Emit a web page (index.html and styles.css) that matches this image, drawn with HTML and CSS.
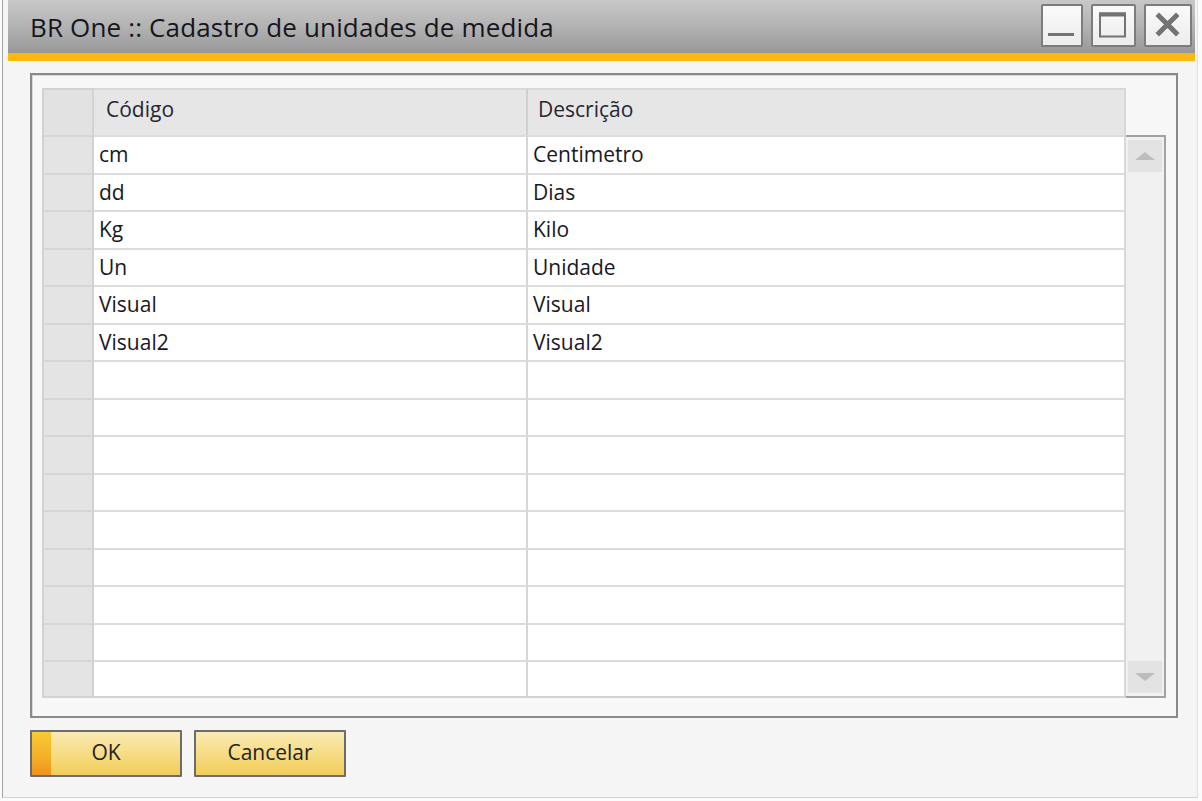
FILE: index.html
```html
<!DOCTYPE html>
<html lang="pt">
<head>
<meta charset="utf-8">
<title>BR One :: Cadastro de unidades de medida</title>
<link rel="stylesheet" href="styles.css">
</head>
<body>
<div class="window">
  <div class="titlebar">
    <div class="title">BR One :: Cadastro de unidades de medida</div>
    <div class="controls">
      <div class="ctl ctl-min"><svg width="42" height="43" viewBox="0 0 42 43"><rect x="7" y="29" width="26" height="3" fill="#737373"/></svg></div>
      <div class="ctl ctl-max"><svg width="45" height="43" viewBox="0 0 45 43"><rect x="9" y="9.5" width="25" height="23" fill="none" stroke="#737373" stroke-width="2"/><rect x="8" y="8.5" width="27" height="4" fill="#737373"/></svg></div>
      <div class="ctl ctl-close"><svg width="48" height="43" viewBox="0 0 48 43"><path d="M15 12 L32 29 M32 12 L15 29" stroke="#737373" stroke-width="5" stroke-linecap="square"/></svg></div>
    </div>
  </div>
  <div class="accent"></div>
  <div class="content">
    <div class="groupbox">
      <div class="grid">
        <div class="grid-head">
          <div class="rh"></div>
          <div class="hc c1">Código</div>
          <div class="hc c2">Descrição</div>
        </div>
        <div class="grid-body">
          <div class="rows">
            <div class="row"><div class="rh"></div><div class="cell c1">cm</div><div class="cell c2">Centimetro</div></div>
            <div class="row"><div class="rh"></div><div class="cell c1">dd</div><div class="cell c2">Dias</div></div>
            <div class="row"><div class="rh"></div><div class="cell c1">Kg</div><div class="cell c2">Kilo</div></div>
            <div class="row"><div class="rh"></div><div class="cell c1">Un</div><div class="cell c2">Unidade</div></div>
            <div class="row"><div class="rh"></div><div class="cell c1">Visual</div><div class="cell c2">Visual</div></div>
            <div class="row"><div class="rh"></div><div class="cell c1">Visual2</div><div class="cell c2">Visual2</div></div>
            <div class="row"><div class="rh"></div><div class="cell c1"></div><div class="cell c2"></div></div>
            <div class="row"><div class="rh"></div><div class="cell c1"></div><div class="cell c2"></div></div>
            <div class="row"><div class="rh"></div><div class="cell c1"></div><div class="cell c2"></div></div>
            <div class="row"><div class="rh"></div><div class="cell c1"></div><div class="cell c2"></div></div>
            <div class="row"><div class="rh"></div><div class="cell c1"></div><div class="cell c2"></div></div>
            <div class="row"><div class="rh"></div><div class="cell c1"></div><div class="cell c2"></div></div>
            <div class="row"><div class="rh"></div><div class="cell c1"></div><div class="cell c2"></div></div>
            <div class="row"><div class="rh"></div><div class="cell c1"></div><div class="cell c2"></div></div>
            <div class="row"><div class="rh"></div><div class="cell c1"></div><div class="cell c2"></div></div>
          </div>
          <div class="scrollbar">
            <div class="sbtn"><span class="tri-up"></span></div>
            <div class="sbtn"><span class="tri-down"></span></div>
          </div>
        </div>
      </div>
    </div>
    <div class="buttons">
      <button class="btn btn-ok">OK</button>
      <button class="btn">Cancelar</button>
    </div>
  </div>
</div>
</body>
</html>
```
FILE: styles.css
```css
* { box-sizing: border-box; }
html, body { margin: 0; padding: 0; }
body {
  background: #fbfbfb;
  font-family: "Open Sans", "Noto Sans", sans-serif;
  color: #1f1f2a;
  width: 1202px;
  height: 801px;
  overflow: hidden;
}
.window {
  margin-left: 2px;
  width: 1196px;
  height: 798px;
  border-left: 1px solid #a4a4a4;
  border-right: 1px solid #e2e2e2;
  border-bottom: 1px solid #cfcfcf;
  background: #f4f4f4;
  padding: 0 2px 0 5px;
  display: flex;
  flex-direction: column;
}
.titlebar {
  height: 53px;
  background: linear-gradient(to bottom, #c8c8c8 0%, #b0b0b0 55%, #979797 100%);
  display: flex;
  justify-content: space-between;
  align-items: flex-start;
  padding-left: 22px;
  padding-right: 3px;
}
.title {
  font-size: 26px;
  line-height: 54px;
  color: #16161e;
  letter-spacing: 0.15px;
}
.controls {
  display: flex;
  gap: 8px;
  margin-top: 4px;
}
.ctl {
  height: 43px;
  border: 2px solid #7c7c7c;
  border-radius: 2px;
  background: linear-gradient(to bottom, #fafafa, #ececec);
  display: flex;
  align-items: center;
  justify-content: center;
  overflow: hidden;
}
.ctl svg { display: block; flex: none; }
.ctl-min { width: 42px; }
.ctl-max { width: 45px; }
.ctl-close { width: 48px; }
.accent {
  height: 8px;
  background: #fbb80d;
}
.content {
  flex: 1;
  background: #f5f5f5;
  padding: 12px 17px 0 22px;
  display: flex;
  flex-direction: column;
}
.groupbox {
  height: 645px;
  border: 2px solid #8a8a8a;
  box-shadow: inset 1px 1px 0 #d8d8d8;
  background: #f7f7f7;
  padding: 13px 10px 18px 10px;
}
.grid {
  display: flex;
  flex-direction: column;
  height: 100%;
}
.grid-head {
  display: flex;
  height: 47px;
  flex: none;
}
.grid-head .rh {
  width: 52px;
  background: #e2e2e2;
  border: 2px solid #d2d2d2;
  border-bottom: none;
}
.hc {
  background: #e6e6e6;
  border-top: 2px solid #d8d8d8;
  font-size: 21px;
  line-height: 38px;
  padding-left: 12px;
  color: #262632;
}
.hc.c1 { width: 434px; border-right: 2px solid #d0d0d0; }
.hc.c2 { width: 598px; border-right: 2px solid #d8d8d8; padding-left: 10px; }
.grid-body {
  flex: 1;
  display: flex;
}
.rows {
  width: 1084px;
  border-bottom: 2px solid #d2d2d2;
  display: flex;
  flex-direction: column;
  background: #fff;
}
.row {
  display: flex;
  height: 38px;
  flex: none;
}
.row:nth-child(even) { height: 37px; }
.row:last-child { flex: 1; }
.row .rh {
  width: 52px;
  background: #e4e4e4;
  border-left: 2px solid #d2d2d2;
  border-right: 2px solid #d2d2d2;
  border-top: 2px solid #d6d6d6;
}
.cell {
  border-top: 2px solid #dcdcdc;
  font-size: 21px;
  line-height: 35px;
  color: #181824;
  background: #fff;
}
.cell.c1 { width: 434px; padding-left: 5px; border-right: 2px solid #d6d6d6; }
.cell.c2 { width: 598px; padding-left: 5px; border-right: 2px solid #d8d8d8; }
.scrollbar {
  width: 40px;
  background: #f1f1f1;
  border-top: 2px solid #a2a2a2;
  border-right: 2px solid #a2a2a2;
  border-bottom: 2px solid #a2a2a2;
  padding: 3px 2px 3px 2px;
  display: flex;
  flex-direction: column;
  justify-content: space-between;
}
.sbtn {
  height: 32px;
  background: #e3e3e3;
  display: flex;
  align-items: center;
  justify-content: center;
}
.tri-up {
  width: 0; height: 0;
  border-left: 10px solid transparent;
  border-right: 10px solid transparent;
  border-bottom: 8px solid #bdbdbd;
}
.tri-down {
  width: 0; height: 0;
  border-left: 10px solid transparent;
  border-right: 10px solid transparent;
  border-top: 8px solid #bdbdbd;
}
.buttons {
  display: flex;
  gap: 12px;
  margin-top: 12px;
}
.btn {
  width: 152px;
  height: 47px;
  border: 2px solid #6c6c6c;
  border-radius: 1px;
  background: linear-gradient(to bottom, #faebb4 0%, #f6dc85 50%, #f1cd58 100%);
  font-family: "Open Sans", "Noto Sans", sans-serif;
  font-size: 21px;
  line-height: 40px;
  color: #1e1e28;
  padding: 0 0 3px 0;
  margin: 0;
}
.btn-ok {
  background:
    linear-gradient(to bottom, #f8cb35 0%, #f3ae27 60%, #ef9418 100%) left top / 19px 100% no-repeat,
    linear-gradient(to bottom, #faebb4 0%, #f6dc85 50%, #f1cd58 100%);
}
```
